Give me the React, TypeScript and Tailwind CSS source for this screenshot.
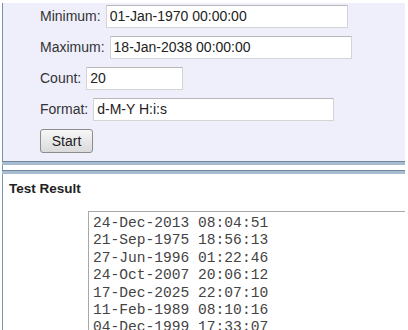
import type React from "react";

const rows = [
  { label: "Minimum:", value: "01-Jan-1970 00:00:00", w: "w-[242px]" },
  { label: "Maximum:", value: "18-Jan-2038 00:00:00", w: "w-[242px]" },
  { label: "Count:", value: "20", w: "w-[97px]" },
  { label: "Format:", value: "d-M-Y H:i:s", w: "w-[241px]" },
];

const results = [
  "24-Dec-2013 08:04:51",
  "21-Sep-1975 18:56:13",
  "27-Jun-1996 01:22:46",
  "24-Oct-2007 20:06:12",
  "17-Dec-2025 22:07:10",
  "11-Feb-1989 08:10:16",
  "04-Dec-1999 17:33:07",
];

const Field: React.FC<{ label: string; value: string; w: string }> = ({
  label,
  value,
  w,
}) => (
  <div className="flex flex-row items-center h-[23px]">
    <span className="text-[14px] text-[#333]">{label}</span>
    <div
      className={`${w} h-[23px] ml-[5px] bg-white border border-[#d4d4d4] border-t-[#b8b8b8] pl-[3px] flex items-center text-[14px] text-[#222]`}
    >
      {value}
    </div>
  </div>
);

const Splitter: React.FC = () => (
  <div className="flex flex-col">
    <div className="h-px bg-[#6f86a0]" />
    <div className="h-[3px] bg-[#a9bccf]" />
  </div>
);

export default function App() {
  return (
    <div
      className="w-[408px] h-[330px] overflow-hidden bg-white pl-[2px] pt-[3px] pr-[3px] flex flex-col"
      style={{ fontFamily: '"Liberation Sans", Arial, sans-serif' }}
    >
      <div className="h-[158px] bg-[#efeffc] border-l border-[#7b93b0] pl-[37px] pt-[2px] flex flex-col gap-[8px]">
        {rows.map((r) => (
          <Field key={r.label} {...r} />
        ))}
        <button className="w-[53px] h-[24px] rounded-[3px] border border-[#8c8c8c] bg-gradient-to-b from-[#f7f7f7] to-[#dadada] text-[14px] text-[#222] leading-none">
          Start
        </button>
      </div>
      <Splitter />
      <div className="h-[5px] bg-white border-l border-[#7b93b0]" />
      <Splitter />
      <div className="flex-1 bg-white border-l border-[#7b93b0] pl-[6px] pt-[7px] overflow-hidden">
        <div className="text-[13.5px] font-bold text-[#222] leading-[16px]">
          Test Result
        </div>
        <div className="ml-[79px] mt-[14px] border-t border-l border-[#a8a8a8] pl-[4px] pt-[3px]">
          {results.map((t) => (
            <div
              key={t}
              className="text-[14.6px] leading-[17.4px] text-[#444] whitespace-pre"
              style={{ fontFamily: '"Liberation Mono", "Courier New", monospace' }}
            >
              {t}
            </div>
          ))}
        </div>
      </div>
    </div>
  );
}
